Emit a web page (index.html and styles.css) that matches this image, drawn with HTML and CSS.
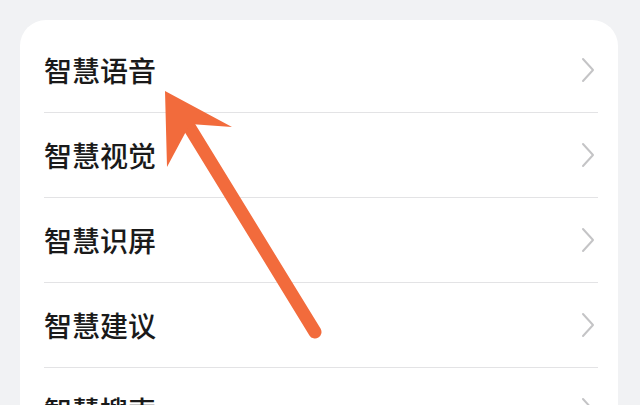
FILE: index.html
```html
<!DOCTYPE html>
<html lang="zh-CN">
<head>
    <meta charset="UTF-8">
    <meta name="viewport" content="width=device-width, initial-scale=1.0">
    <title>智慧助手</title>
    <link rel="stylesheet" href="styles.css">
</head>
<body>
    <div class="card">
        <div class="row"><span class="label">智慧语音</span><svg class="chevron" width="14" height="26" viewBox="0 0 14 26"><polyline points="2,2 12,13 2,24" /></svg></div>
        <div class="row"><span class="label">智慧视觉</span><svg class="chevron" width="14" height="26" viewBox="0 0 14 26"><polyline points="2,2 12,13 2,24" /></svg></div>
        <div class="row"><span class="label">智慧识屏</span><svg class="chevron" width="14" height="26" viewBox="0 0 14 26"><polyline points="2,2 12,13 2,24" /></svg></div>
        <div class="row"><span class="label">智慧建议</span><svg class="chevron" width="14" height="26" viewBox="0 0 14 26"><polyline points="2,2 12,13 2,24" /></svg></div>
        <div class="row"><span class="label">智慧搜索</span><svg class="chevron" width="14" height="26" viewBox="0 0 14 26"><polyline points="2,2 12,13 2,24" /></svg></div>
    </div>

    <svg class="arrow" width="640" height="405" viewBox="0 0 640 405">
        <line x1="315" y1="332" x2="185" y2="120" stroke="#f26b3c" stroke-width="13" stroke-linecap="round"/>
        <polygon points="165,91 232,127 190,124 167,167" fill="#f26b3c"/>
    </svg>
</body>
</html>
```

FILE: styles.css
```css
body {
    margin: 0;
    padding: 20px 22px 0 20px;
    height: 405px;
    box-sizing: border-box;
    overflow: hidden;
    background-color: #f1f2f4;
    font-family: "Noto Sans CJK SC", "Noto Sans", sans-serif;
    position: relative;
}

.card {
    background: white;
    border-radius: 26px;
    padding-top: 8px;
}

.row {
    height: 84px;
    margin: 0 20px 0 24px;
    border-bottom: 1px solid #e3e3e5;
    display: flex;
    align-items: center;
    justify-content: space-between;
}

.label {
    font-size: 28px;
    font-weight: 500;
    color: #1a1a1a;
    line-height: 1;
}

.chevron {
    margin-right: 3px;
    fill: none;
    stroke: #c4c4c6;
    stroke-width: 2;
    stroke-linecap: round;
    stroke-linejoin: round;
}

.arrow {
    position: absolute;
    left: 0;
    top: 0;
}
```
